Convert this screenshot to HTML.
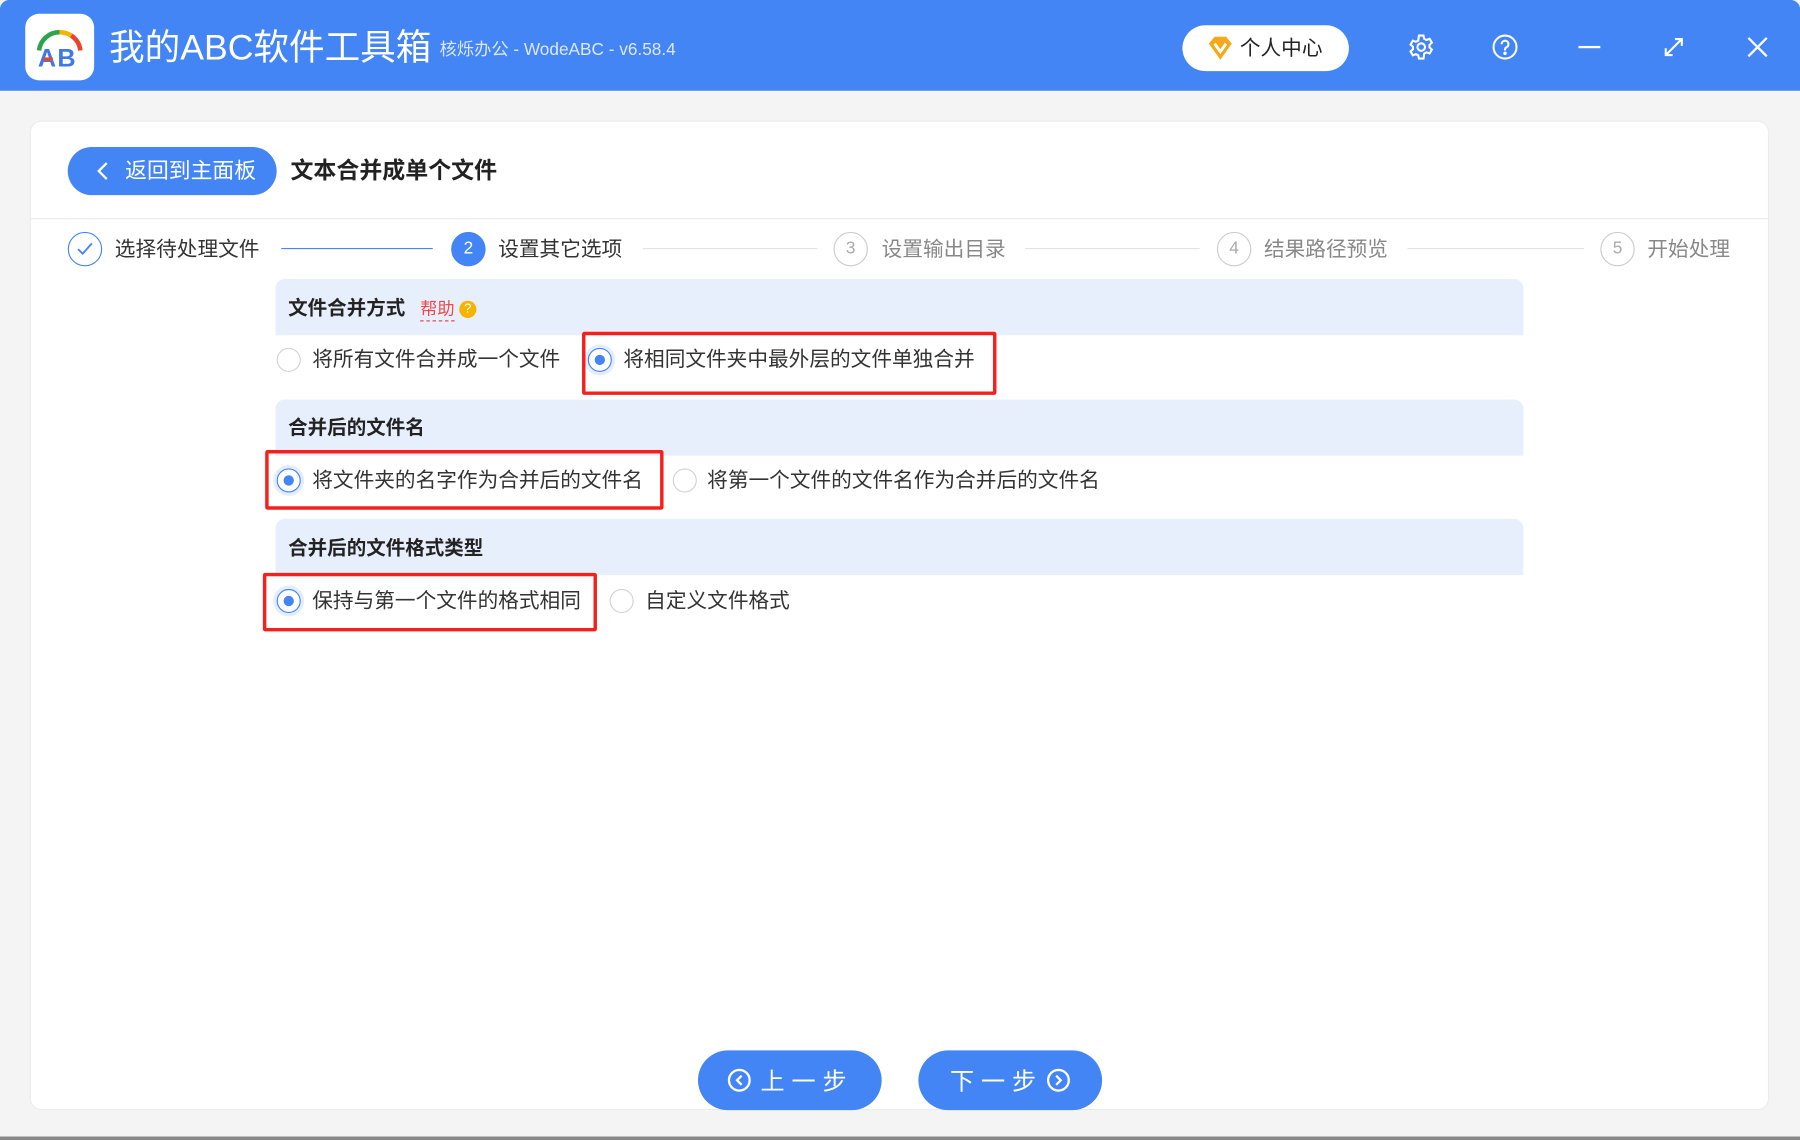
<!DOCTYPE html>
<html><head><meta charset="utf-8"><style>
*{margin:0;padding:0;box-sizing:border-box}
html,body{width:1800px;height:1140px;overflow:hidden;background:#fff}
#s{width:1568px;height:993px;transform:scale(1.148);transform-origin:0 0;position:relative;background:#f4f4f4;font-family:"Liberation Sans","Noto Sans CJK SC",sans-serif;color:#222}
.a{position:absolute}
.top{left:0;top:0;width:1568px;height:79px;background:#4385f5;border-radius:8px 8px 0 0}
.panel{left:26px;top:105px;width:1515px;height:862px;background:#fff;border:1px solid #ececec;border-radius:10px}
.t{white-space:nowrap;line-height:1}
.circ{width:30px;height:30px;border-radius:50%;border:1px solid #ccc;color:#aaa;font-size:15px;text-align:center;line-height:28px}
.ln{height:1px;background:#e3e3e3;top:216px}
.hd{left:240px;width:1087px;height:49px;background:#e8effc;border-radius:8px 8px 0 0}
.ht{font-weight:bold;font-size:17px}
.r{width:21px;height:21px;border-radius:50%;border:1px solid #d3d3d3;background:#fff}
.r.on{border-color:#4385f5;box-shadow:0 0 0 3px #e4edfd}
.r.on:after{content:"";position:absolute;left:5px;top:5px;width:9px;height:9px;border-radius:50%;background:#4385f5}
.ot{font-size:18px;color:#333}
.red{border:3px solid #f5201c;border-radius:2px}
.btn{background:#4385f5;border-radius:26px;color:#fff;font-size:21px;height:52px;top:915px;width:160px;display:flex;align-items:center;justify-content:center;letter-spacing:6px}
</style></head><body><div id="s">
<div class="a top"></div>
<div class="a" style="left:22px;top:12px;width:60px;height:58px;background:#fff;border-radius:12px"></div>
<svg class="a" style="left:26px;top:16px" width="52" height="50" viewBox="0 0 52 50">
<path d="M8 28 A18 18 0 0 1 26 12" stroke="#2ca44e" stroke-width="4" fill="none"/>
<path d="M26 12 A18 18 0 0 1 36 15" stroke="#f4b400" stroke-width="4" fill="none"/>
<path d="M36 15 A18 18 0 0 1 44 28" stroke="#e8452c" stroke-width="4" fill="none"/>
<text x="7" y="42" font-size="22" font-weight="bold" fill="#3d7ae8" font-family="Liberation Sans">A</text>
<text x="24" y="42" font-size="22" font-weight="bold" fill="#3d7ae8" font-family="Liberation Sans">B</text>
<rect x="12" y="34" width="8" height="3" fill="#e8452c"/></svg>
<div class="a t" style="left:95px;top:26px;font-size:31px;color:#fff">我的ABC软件工具箱</div>
<div class="a t" style="left:383px;top:36px;font-size:15px;color:#dce8ff">核烁办公 - WodeABC - v6.58.4</div>
<div class="a" style="left:1030px;top:22px;width:145px;height:40px;background:#fff;border-radius:20px"></div>
<svg class="a" style="left:1051px;top:31px" width="24" height="22" viewBox="0 0 24 22"><path d="M2 7 L7 1 H17 L22 7 L12 21Z" fill="#f5a91a"/><path d="M7 7 L12 14 L17 7" stroke="#fff" stroke-width="2.5" fill="none"/></svg>
<div class="a t" style="left:1080px;top:33px;font-size:18px;color:#222">个人中心</div>
<svg class="a" style="left:1226px;top:29px" width="24" height="24" viewBox="0 0 24 24" fill="none" stroke="#fff" stroke-width="1.8"><path d="M10 2h4l.6 2.8 2 1 2.7-1 2 3.4-2.1 1.9v2.2l2.1 1.9-2 3.4-2.7-1-2 1L14 22h-4l-.6-2.8-2-1-2.7 1-2-3.4 2.1-1.9v-2.2L2.7 9.8l2-3.4 2.7 1 2-1z"/><circle cx="12" cy="12" r="3.3"/></svg>
<svg class="a" style="left:1299px;top:29px" width="24" height="24" viewBox="0 0 24 24" fill="none" stroke="#fff" stroke-width="1.8"><circle cx="12" cy="12" r="10"/><path d="M9 9.5a3 3 0 1 1 4 2.8c-.8.4-1 1-1 2v.7"/><circle cx="12" cy="17.5" r=".6" fill="#fff"/></svg>
<div class="a" style="left:1375px;top:40px;width:19px;height:2px;background:#fff"></div>
<svg class="a" style="left:1448px;top:31px" width="20" height="20" viewBox="0 0 20 20" stroke="#fff" stroke-width="1.8" fill="none"><path d="M3 17 L17 3M11 3h6v6M3 11v6h6"/></svg>
<svg class="a" style="left:1521px;top:31px" width="20" height="20" viewBox="0 0 20 20" stroke="#fff" stroke-width="2"><path d="M2 2L18 18M18 2L2 18"/></svg>
<div class="a panel"></div>
<div class="a" style="left:59px;top:128px;width:182px;height:42px;background:#4385f5;border-radius:21px"></div>
<svg class="a" style="left:83px;top:140px" width="12" height="18" viewBox="0 0 12 18"><path d="M10 2L3 9l7 7" stroke="#fff" stroke-width="2" fill="none"/></svg>
<div class="a t" style="left:109px;top:140px;font-size:19px;color:#fff">返回到主面板</div>
<div class="a t" style="left:253px;top:139px;font-size:20px;font-weight:bold;color:#222">文本合并成单个文件</div>
<div class="a" style="left:27px;top:190px;width:1513px;height:1px;background:#ececec"></div>
<div class="a circ" style="left:59px;top:202px;border-color:#4385f5"></div>
<svg class="a" style="left:66px;top:210px" width="16" height="14" viewBox="0 0 16 14"><path d="M2 7l4 4 8-9" stroke="#4385f5" stroke-width="1.6" fill="none"/></svg>
<div class="a t ot" style="left:100px;top:208px;font-size:18px">选择待处理文件</div>
<div class="a ln" style="left:245px;width:132px;background:#4385f5"></div>
<div class="a circ" style="left:393px;top:202px;background:#4385f5;border-color:#4385f5;color:#fff">2</div>
<div class="a t ot" style="left:434px;top:208px;font-size:18px">设置其它选项</div>
<div class="a ln" style="left:560px;width:152px"></div>
<div class="a circ" style="left:726px;top:202px">3</div>
<div class="a t" style="left:768px;top:208px;font-size:18px;color:#888">设置输出目录</div>
<div class="a ln" style="left:893px;width:152px"></div>
<div class="a circ" style="left:1060px;top:202px">4</div>
<div class="a t" style="left:1101px;top:208px;font-size:18px;color:#888">结果路径预览</div>
<div class="a ln" style="left:1226px;width:154px"></div>
<div class="a circ" style="left:1394px;top:202px">5</div>
<div class="a t" style="left:1435px;top:208px;font-size:18px;color:#888">开始处理</div>

<div class="a hd" style="top:243px"></div>
<div class="a t ht" style="left:251px;top:260px">文件合并方式</div>
<div class="a t" style="left:366px;top:262px;font-size:15px;color:#f04848;border-bottom:1px dashed #f04848;padding-bottom:2px">帮助</div>
<div class="a" style="left:400px;top:262px;width:15px;height:15px;border-radius:50%;background:#f5b400;color:#fff;font-size:11px;text-align:center;line-height:15px">?</div>
<div class="a r" style="left:241px;top:303px"></div>
<div class="a t ot" style="left:272px;top:304px">将所有文件合并成一个文件</div>
<div class="a r on" style="left:512px;top:303px"></div>
<div class="a t ot" style="left:543px;top:304px">将相同文件夹中最外层的文件单独合并</div>
<div class="a red" style="left:507px;top:289px;width:361px;height:55px"></div>

<div class="a hd" style="top:348px"></div>
<div class="a t ht" style="left:251px;top:364px">合并后的文件名</div>
<div class="a r on" style="left:241px;top:408px"></div>
<div class="a t ot" style="left:272px;top:409px">将文件夹的名字作为合并后的文件名</div>
<div class="a r" style="left:586px;top:408px"></div>
<div class="a t ot" style="left:616px;top:409px">将第一个文件的文件名作为合并后的文件名</div>
<div class="a red" style="left:231px;top:392px;width:347px;height:52px"></div>

<div class="a hd" style="top:452px"></div>
<div class="a t ht" style="left:251px;top:469px">合并后的文件格式类型</div>
<div class="a r on" style="left:241px;top:513px"></div>
<div class="a t ot" style="left:272px;top:514px">保持与第一个文件的格式相同</div>
<div class="a r" style="left:531px;top:513px"></div>
<div class="a t ot" style="left:562px;top:514px">自定义文件格式</div>
<div class="a red" style="left:229px;top:499px;width:291px;height:51px"></div>

<div class="a btn" style="left:608px"><svg width="22" height="22" viewBox="0 0 22 22" style="margin-right:8px"><circle cx="11" cy="11" r="9" stroke="#fff" stroke-width="2" fill="none"/><path d="M13 7l-4 4 4 4" stroke="#fff" stroke-width="2" fill="none"/></svg>上一步</div>
<div class="a btn" style="left:800px">下一步<svg width="22" height="22" viewBox="0 0 22 22" style="margin-left:2px"><circle cx="11" cy="11" r="9" stroke="#fff" stroke-width="2" fill="none"/><path d="M9 7l4 4-4 4" stroke="#fff" stroke-width="2" fill="none"/></svg></div>
<div class="a" style="left:0;top:990px;width:1568px;height:3px;background:#888"></div>
</div></body></html>
